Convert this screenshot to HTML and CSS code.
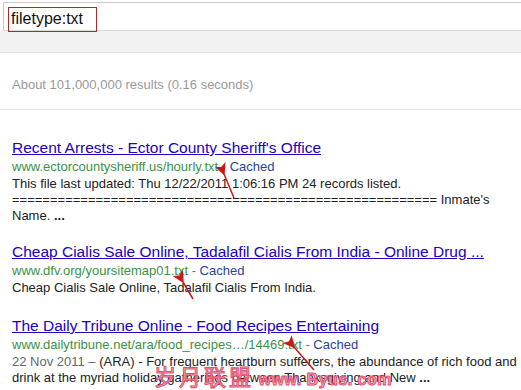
FILE: index.html
```html
<!DOCTYPE html>
<html>
<head>
    <title>filetype:txt - Google Search</title>
    <link rel="stylesheet" href="styles.css">
</head>
<body>
    <div class="searchbar">
        <div class="query"><span class="query-text">filetype:txt</span></div>
    </div>
    <div class="toolbar"></div>

    <div class="stats">About 101,000,000 results (0.16 seconds)</div>

    <div class="results">
        <div class="result">
            <a class="title" href="#">Recent Arrests - Ector County Sheriff's Office</a>
            <div class="url">www.ectorcountysheriff.us/hourly.txt - <a href="#">Cached</a></div>
            <div class="snippet">This file last updated: Thu 12/22/2011 1:06:16 PM 24 records listed.<br>======================================================== Inmate's<br>Name. <b>...</b></div>
        </div>
        <div class="result">
            <a class="title" href="#">Cheap Cialis Sale Online, Tadalafil Cialis From India - Online Drug <b>...</b></a>
            <div class="url">www.dfv.org/yoursitemap01.txt - <a href="#">Cached</a></div>
            <div class="snippet">Cheap Cialis Sale Online, Tadalafil Cialis From India.</div>
        </div>
        <div class="result">
            <a class="title" href="#">The Daily Tribune Online - Food Recipes Entertaining</a>
            <div class="url">www.dailytribune.net/ara/food_recipes…/14469.txt - <a href="#">Cached</a></div>
            <div class="snippet"><span class="date">22 Nov 2011 –</span> (ARA) - For frequent heartburn sufferers, the abundance of rich food and<br>drink at the myriad holiday gatherings between Thanksgiving and New <b>...</b></div>
        </div>
    </div>

    <!-- стрелки поверх скриншота -->
    <svg class="arrows" width="521" height="390">
        <defs>
            <marker id="head" markerWidth="8" markerHeight="8" refX="1" refY="4" orient="auto">
                <path d="M0,4 L8,0 L6,4 L8,8 Z" fill="#c81818"/>
            </marker>
        </defs>
        <line x1="234" y1="198" x2="224" y2="174" stroke="#c81818" stroke-width="1.5" marker-end="url(#head)"/>
        <line x1="193" y1="299" x2="183" y2="282" stroke="#c81818" stroke-width="1.5" marker-end="url(#head)"/>
        <line x1="314" y1="370" x2="294" y2="347" stroke="#c81818" stroke-width="1.5" marker-end="url(#head)"/>
    </svg>

    <div class="watermark"><span class="wm-cn">岁月联盟</span> <span class="wm-en">www. Byus. com</span></div>
</body>
</html>
```

FILE: styles.css
```css
body {
    margin: 0;
    padding: 0;
    background: white;
    font-family: "Liberation Sans", Arial, sans-serif;
    color: #222;
    position: relative;
    width: 521px;
    height: 390px;
    overflow: hidden;
}

.searchbar {
    padding: 2px 0 0 3px;
    background: white;
}

.query {
    height: 27px;
    border: 1px solid #c9c9c9;
    border-right: none;
    border-bottom-color: #d9d9d9;
}

.query-text {
    display: inline-block;
    margin: 4px 0 0 4px;
    padding: 0 13px 0 2px;
    height: 23px;
    line-height: 21px;
    border: 1px solid #a03030;
    font-size: 16px;
    color: #111;
}

.toolbar {
    height: 21px;
    background: #f2f2f2;
    border-bottom: 1px solid #e2e2e2;
}

.stats {
    margin-top: 24px;
    padding: 0 12px 16px;
    line-height: 16px;
    font-size: 13px;
    color: #999;
    border-bottom: 1px solid #e5e5e5;
}

.results {
    padding: 28px 12px 0;
}

.result {
    margin-bottom: 18px;
}

.result:last-child {
    margin-top: 20px;
}

.title {
    display: block;
    font-size: 15.5px;
    line-height: 20px;
    color: #2200c1;
    text-decoration: underline;
    white-space: nowrap;
}

.title b {
    font-weight: normal;
}

.url {
    font-size: 13px;
    line-height: 18px;
    color: #3b9247;
}

.url a {
    color: #2a3fa8;
    text-decoration: none;
}

.snippet {
    font-size: 13px;
    line-height: 16px;
    color: #222;
    white-space: nowrap;
}

.date {
    color: #666;
}

.arrows {
    position: absolute;
    left: 0;
    top: 0;
    pointer-events: none;
}

.watermark {
    position: absolute;
    left: 154px;
    top: 362px;
    white-space: nowrap;
    color: #f4b0bf;
    -webkit-text-stroke: 1px #e0506e;
    line-height: 26px;
}

.wm-cn {
    font-family: "Noto Sans CJK SC", sans-serif;
    font-size: 22px;
    letter-spacing: 3px;
}

.wm-en {
    font-family: "Liberation Sans", Arial, sans-serif;
    font-size: 16px;
    font-weight: bold;
    letter-spacing: 0.5px;
}
```
